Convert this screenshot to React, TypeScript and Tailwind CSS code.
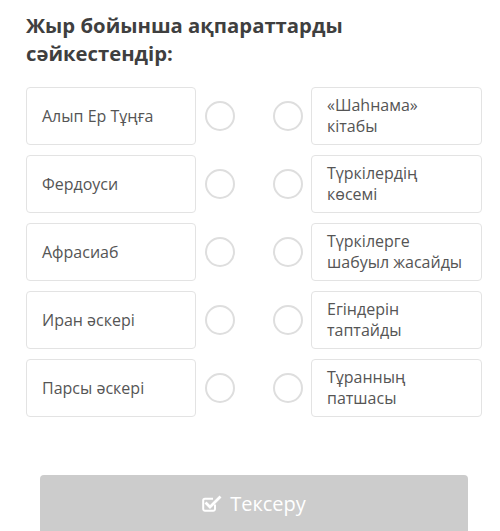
const left = ["Алып Ер Тұңға", "Фердоуси", "Афрасиаб", "Иран әскері", "Парсы әскері"];
const right = ["«Шаһнама» кітабы", "Түркілердің көсемі", "Түркілерге шабуыл жасайды", "Егіндерін таптайды", "Тұранның патшасы"];

function Dot() {
  return <div className="h-[30px] w-[30px] shrink-0 rounded-full border-2 border-[#dedede] bg-white" />;
}

function CheckSquare() {
  return (
    <svg width="20" height="17" viewBox="0 0 20 17" fill="none" stroke="white">
      <path d="M13 9.5V14a1.8 1.8 0 0 1-1.8 1.8H3A1.8 1.8 0 0 1 1.2 14V5.5A1.8 1.8 0 0 1 3 3.7h8" strokeWidth="2" />
      <path d="M4.5 8.5l3.5 3.5L17.5 2.5" strokeWidth="2.8" strokeLinecap="square" />
    </svg>
  );
}

export default function App() {
  return (
    <div className="h-[531px] w-[500px] overflow-hidden bg-white" style={{ fontFamily: '"Open Sans", sans-serif' }}>
      <h1 className="px-[26px] pt-[11px] text-[20.3px] font-bold leading-[28px] text-[#3f3f3f]">
        Жыр бойынша ақпараттарды
        <br />
        сәйкестендір:
      </h1>
      <div className="mt-[20px] flex flex-col gap-[10px] pl-[26px]">
        {left.map((l, i) => (
          <div key={l} className="flex items-center">
            <div className="flex h-[58px] w-[170px] items-center rounded-[4px] border border-[#e3e3e3] px-[15px] text-[16px] text-[#555]">
              {l}
            </div>
            <div className="ml-[9px]"><Dot /></div>
            <div className="ml-[38px]"><Dot /></div>
            <div className="ml-[8px] flex h-[58px] w-[171px] items-center rounded-[4px] border border-[#e3e3e3] pl-[15px] pr-[12px] text-[16px] leading-[21px] text-[#555]">
              {right[i]}
            </div>
          </div>
        ))}
      </div>
      <div className="ml-[40px] mt-[58px] flex h-[60px] w-[428px] items-center justify-center gap-[8px] rounded-[4px] bg-[#cccccc] pb-[3px] text-[20px] text-white">
        <CheckSquare />
        <span>Тексеру</span>
      </div>
    </div>
  );
}
